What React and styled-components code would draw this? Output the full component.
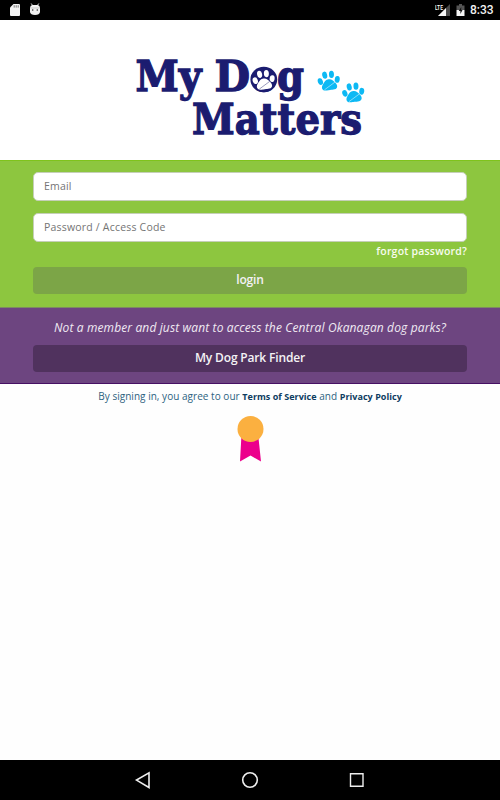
import React from 'react'
import styled, { createGlobalStyle } from 'styled-components'

const GlobalStyle = createGlobalStyle`
  * {
    box-sizing: border-box;
  }
  body {
    margin: 0;
    background: #fefefe;
    font-family: "Open Sans", "Noto Sans", sans-serif;
  }
`

const Screen = styled.div`
  width: 500px;
  height: 800px;
  display: flex;
  flex-direction: column;
  overflow: hidden;
  background: #fefefe;
`

const StatusBar = styled.div`
  height: 20px;
  flex: none;
  padding: 0 7px 0 9px;
  display: flex;
  justify-content: space-between;
  background: black;
  svg {
    display: block;
  }
`

const StatusGroup = styled.div`
  display: flex;
  align-items: center;
  gap: ${props => props.$gap};
`

const Clock = styled.span`
  width: 23px;
  font: 500 12px/21px Roboto, sans-serif;
  color: #f2f2f2;
  white-space: nowrap;
`

const LogoArea = styled.header`
  height: 140px;
  flex: none;
  background: white;
  svg {
    display: block;
  }
`

const LoginForm = styled.form`
  height: 148px;
  flex: none;
  padding: 11px 33px 0;
  display: flex;
  flex-direction: column;
  background: #8dc63f;
  border-top: 1px solid #7fc31c;
  border-bottom: 1px solid #7d8a62;
`

const Input = styled.input`
  width: 100%;
  height: 29px;
  flex: none;
  margin-bottom: 12px;
  padding: 0 10px 2px;
  border: 1px solid #c5cfb8;
  border-radius: 5px;
  background: white;
  font: 10.5px "Open Sans", sans-serif;
  letter-spacing: 0.2px;
  &::placeholder {
    color: #747474;
    opacity: 1;
  }
`

const ForgotLink = styled.a`
  align-self: flex-end;
  height: 23px;
  margin-top: -10px;
  font-size: 10.5px;
  font-weight: 600;
  line-height: 14px;
  letter-spacing: 0.2px;
  color: #f8fcef;
`

const Button = styled.button`
  width: 100%;
  height: 27px;
  flex: none;
  padding: 0 0 2px;
  border: 0;
  border-radius: 4px;
  background: ${props => props.$color};
  font: 600 12px/24px "Open Sans", sans-serif;
  letter-spacing: -0.16px;
  color: #f4f2f5;
`

const Finder = styled.section`
  height: 76px;
  flex: none;
  padding: 10px 33px 0;
  background: #6d4580;
  border-bottom: 1px solid #461064;
`

const FinderText = styled.p`
  height: 27px;
  margin: 0;
  font-size: 12px;
  font-style: italic;
  line-height: 20px;
  letter-spacing: 0.13px;
  text-align: center;
  white-space: nowrap;
  color: #f0eaf3;
`

const FinderButton = styled(Button)`
  padding-bottom: 1px;
`

const Terms = styled.p`
  height: 32px;
  margin: 0;
  flex: none;
  font-size: 10px;
  line-height: 24px;
  letter-spacing: 0.03px;
  text-align: center;
  white-space: nowrap;
  color: #2d6280;
  b {
    font-size: 9px;
    color: #0d3c61;
  }
`

const Award = styled.div`
  flex: 1;
  display: flex;
  align-items: flex-start;
  justify-content: center;
`

const NavBar = styled.nav`
  height: 40px;
  flex: none;
  display: flex;
  align-items: center;
  justify-content: center;
  gap: 83px;
  background: black;
`

const Paw = ({ x, y, color, line }) => (
  <g transform={`translate(${x} ${y}) rotate(-7)`} fill={color}>
    <ellipse cx="-8.5" cy="0" rx="2.5" ry="3.4" transform="rotate(-14 -8.5 0)" />
    <ellipse cx="-3.4" cy="-5.8" rx="2.5" ry="3.6" transform="rotate(-5 -3.4 -5.8)" />
    <ellipse cx="3.4" cy="-5.8" rx="2.5" ry="3.6" transform="rotate(5 3.4 -5.8)" />
    <ellipse cx="8.5" cy="0" rx="2.5" ry="3.4" transform="rotate(14 8.5 0)" />
    <path d="M0-1.2C3-1.2 4.2.6 6 2.700C8.500 5.500 8.200 9 4.700 9.500C2.800 9.900 1.800 9.600 0 9.600S-2.800 9.900-4.700 9.500C-8.200 9-8.500 5.500-6 2.700C-4.200.6-3-1.200 0-1.200Z" />
    <path d="M-5.500 8.800L6.500 2" stroke={line} strokeWidth=".7" fill="none" />
  </g>
)

const Logo = () => (
  <svg width="500" height="140" viewBox="0 20 500 140">
    <g
      fill="#1b1c70"
      stroke="#1b1c70"
      strokeWidth="1.3"
      fontFamily="DejaVu Serif, serif"
      fontWeight="700"
      fontSize="42"
    >
      <text x="135.5" y="91" textLength="66" lengthAdjust="spacingAndGlyphs">My</text>
      <text x="214.500" y="91" textLength="35.500" lengthAdjust="spacingAndGlyphs">D</text>
      <text x="251.500" y="91" textLength="24.500" lengthAdjust="spacingAndGlyphs">o</text>
      <text x="277" y="91" textLength="27" lengthAdjust="spacingAndGlyphs">g</text>
      <text x="192" y="133.700" textLength="170" lengthAdjust="spacingAndGlyphs">Matters</text>
    </g>
    <ellipse cx="263.8" cy="79.5" rx="13.4" ry="12.7" fill="#1b1c70" />
    <Paw x={263.7} y={79.7} color="#fff" line="#777aa8" />
    <Paw x={328.8} y={80.5} color="#0db9f4" line="#b0e8fa" />
    <Paw x={353.3} y={92.3} color="#0db9f4" line="#b0e8fa" />
  </svg>
)

const SdCardIcon = () => (
  <svg width="12" height="20">
    <path d="M4.500 4H10Q11 4 11 5V15Q11 16 10 16H2Q1 16 1 15V7.500Z" fill="#f2f2f2" />
    <path d="M5.200 5.200v2.400M7.200 5.200v2.400M9.200 5.200v2.400" stroke="#777" />
  </svg>
)

const DroidIcon = () => (
  <svg width="12" height="20">
    <path d="M2.200 3.500L4 6M9.800 3.500L8 6" stroke="#ddd" />
    <path d="M1 8.200Q1.300 5 4 5H8Q10.700 5 11 8.200V12Q10.500 15 6 15T1 12Z" fill="#f2f2f2" />
    <path d="M1.500 8H10.500" stroke="#aaa" strokeWidth=".6" />
    <circle cx="3.700" cy="10" r=".8" fill="#333" />
    <circle cx="8.300" cy="10" r=".8" fill="#333" />
  </svg>
)

const SignalIcon = () => (
  <svg width="17" height="20">
    <path d="M15 4V16H3Z" fill="#4a4a4a" />
    <path d="M11 8V16H3Z" fill="#f5f5f5" />
    <text x="0" y="9.500" fontFamily="Roboto, sans-serif" fontSize="7.500" fontWeight="500" textLength="8" lengthAdjust="spacingAndGlyphs" fill="#fff">LTE</text>
  </svg>
)

const BatteryIcon = () => (
  <svg width="10" height="20">
    <path d="M3 4H6V5.500H8.500V10H.5V5.500H3Z" fill="#555" />
    <path d="M.5 10H8.500V16H.5Z" fill="#f5f5f5" />
    <path d="M5.200 7L2.800 11H4.400V14L6.500 10H5.200Z" fill="#111" />
  </svg>
)

const App = () => (
  <>
    <GlobalStyle />
    <Screen>
      <StatusBar>
        <StatusGroup $gap="8px">
          <SdCardIcon />
          <DroidIcon />
        </StatusGroup>
        <StatusGroup $gap="4px">
          <SignalIcon />
          <BatteryIcon />
          <Clock>8:33</Clock>
        </StatusGroup>
      </StatusBar>
      <LogoArea>
        <Logo />
      </LogoArea>
      <LoginForm>
        <Input type="email" placeholder="Email" />
        <Input type="password" placeholder="Password / Access Code" />
        <ForgotLink>forgot password?</ForgotLink>
        <Button type="button" $color="#7ca547">login</Button>
      </LoginForm>
      <Finder>
        <FinderText>Not a member and just want to access the Central Okanagan dog parks?</FinderText>
        <FinderButton type="button" $color="#50325e">My Dog Park Finder</FinderButton>
      </Finder>
      <Terms>
        By signing in, you agree to our <b>Terms of Service</b> and <b>Privacy Policy</b>
      </Terms>
      <Award>
        <svg width="28" height="48">
          <path d="M5.300 22H22.500L25 45.500L14.500 39.500L4 45.500Z" fill="#ec008c" />
          <circle cx="14.500" cy="13" r="13" fill="#fbb040" />
        </svg>
      </Award>
      <NavBar>
        <svg width="24" height="24" fill="none" stroke="#eee" strokeWidth="1.600">
          <path d="M18 4.800V19.500L5.500 12.100Z" />
        </svg>
        <svg width="24" height="24" fill="none" stroke="#eee" strokeWidth="1.600">
          <circle cx="12" cy="12" r="7.300" />
        </svg>
        <svg width="24" height="24" fill="none" stroke="#eee" strokeWidth="1.400">
          <path d="M5.500 5.700H18V18.200H5.500Z" />
        </svg>
      </NavBar>
    </Screen>
  </>
)

export default App
